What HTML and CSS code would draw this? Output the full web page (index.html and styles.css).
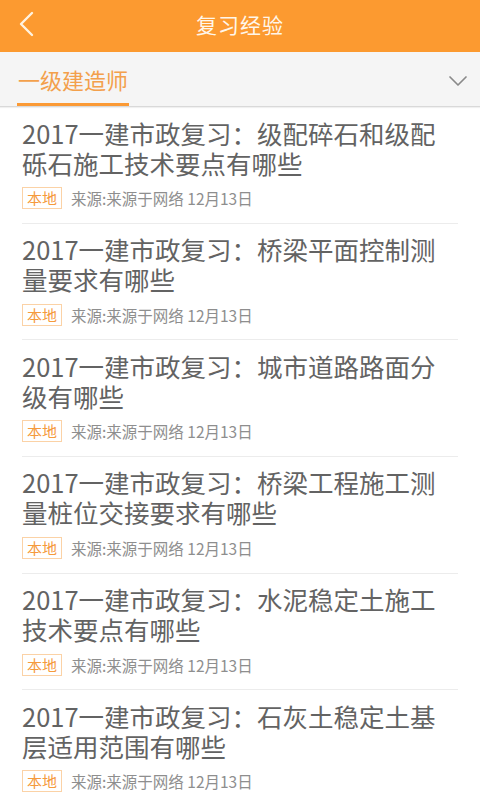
FILE: index.html
```html
<!DOCTYPE html>
<html lang="zh-CN">
<head>
    <meta charset="UTF-8">
    <meta name="viewport" content="width=device-width, initial-scale=1.0">
    <title>复习经验</title>
    <link rel="stylesheet" href="styles.css">
</head>
<body>
    <div class="top-bar">
        <svg class="back" width="16" height="26" viewBox="0 0 16 26">
            <polyline points="13,2 2,13 13,24" fill="none" stroke="#fff3e0" stroke-width="2.4" stroke-linecap="round" stroke-linejoin="round"/>
        </svg>
        <div class="top-title">复习经验</div>
    </div>

    <div class="tab-bar">
        <div class="tab active">一级建造师</div>
        <svg class="drop" width="20" height="12" viewBox="0 0 20 12">
            <polyline points="2,2 10,10 18,2" fill="none" stroke="#8a8a8a" stroke-width="1.7" stroke-linecap="round" stroke-linejoin="round"/>
        </svg>
    </div>

    <ul class="news-list">
        <li class="news-item">
            <div class="news-title">2017一建市政复习：级配碎石和级配砾石施工技术要点有哪些</div>
            <div class="news-meta"><span class="tag">本地</span>来源:来源于网络 12月13日</div>
        </li>
        <li class="news-item">
            <div class="news-title">2017一建市政复习：桥梁平面控制测量要求有哪些</div>
            <div class="news-meta"><span class="tag">本地</span>来源:来源于网络 12月13日</div>
        </li>
        <li class="news-item">
            <div class="news-title">2017一建市政复习：城市道路路面分级有哪些</div>
            <div class="news-meta"><span class="tag">本地</span>来源:来源于网络 12月13日</div>
        </li>
        <li class="news-item">
            <div class="news-title">2017一建市政复习：桥梁工程施工测量桩位交接要求有哪些</div>
            <div class="news-meta"><span class="tag">本地</span>来源:来源于网络 12月13日</div>
        </li>
        <li class="news-item">
            <div class="news-title">2017一建市政复习：水泥稳定土施工技术要点有哪些</div>
            <div class="news-meta"><span class="tag">本地</span>来源:来源于网络 12月13日</div>
        </li>
        <li class="news-item">
            <div class="news-title">2017一建市政复习：石灰土稳定土基层适用范围有哪些</div>
            <div class="news-meta"><span class="tag">本地</span>来源:来源于网络 12月13日</div>
        </li>
    </ul>
</body>
</html>
```

FILE: styles.css
```css
body {
    margin: 0;
    background: #ffffff;
    font-family: "Noto Sans CJK SC", "Noto Sans", sans-serif;
    overflow: hidden;
}

.top-bar {
    height: 52px;
    background: #fc9a30;
    display: flex;
    align-items: center;
    justify-content: center;
    position: relative;
}

.back {
    position: absolute;
    left: 19px;
    top: 11px;
}

.top-title {
    color: #fff6ea;
    font-size: 21px;
    letter-spacing: 1px;
    margin-top: -4px;
}

.tab-bar {
    height: 54px;
    background: #f5f5f5;
    border-bottom: 1px solid #d9d9d9;
    box-shadow: 0 1px 1px rgba(0, 0, 0, 0.06);
    display: flex;
    align-items: stretch;
    justify-content: space-between;
    padding: 0 12px 0 17px;
}

.tab {
    display: flex;
    align-items: center;
    font-size: 22px;
    color: #f3a04c;
    padding: 3px 1px 0;
    border-bottom: 3px solid transparent;
}

.tab.active {
    border-bottom-color: #fb9a35;
}

.drop {
    align-self: center;
    margin-top: 3px;
}

.news-list {
    list-style: none;
    margin: 0;
    padding: 0 22px;
}

.news-item {
    padding: 10.5px 0 13.67px;
    border-bottom: 1px solid #ececec;
}

.news-title {
    font-size: 25.5px;
    line-height: 30px;
    color: #636363;
}

.news-meta {
    margin-top: 9.5px;
    display: flex;
    align-items: center;
    font-size: 15.5px;
    line-height: 22px;
    color: #8e8e8e;
}

.tag {
    box-sizing: border-box;
    height: 22px;
    padding: 0 4px;
    margin-right: 9px;
    border: 1px solid #fbd2a6;
    color: #f59a3c;
    font-size: 15px;
    line-height: 20px;
}
```
